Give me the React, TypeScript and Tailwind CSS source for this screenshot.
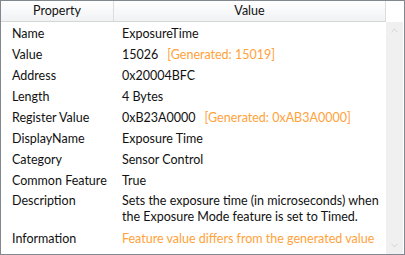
import { ChevronUp, ChevronDown } from 'lucide-react';

const rows: { label: string; value: string[]; generated?: string; orange?: boolean; tall?: boolean }[] = [
  { label: 'Name', value: ['ExposureTime'] },
  { label: 'Value', value: ['15026'], generated: '[Generated: 15019]' },
  { label: 'Address', value: ['0x20004BFC'] },
  { label: 'Length', value: ['4 Bytes'] },
  { label: 'Register Value', value: ['0xB23A0000'], generated: '[Generated: 0xAB3A0000]' },
  { label: 'DisplayName', value: ['Exposure Time'] },
  { label: 'Category', value: ['Sensor Control'] },
  { label: 'Common Feature', value: ['True'] },
  {
    label: 'Description',
    value: ['Sets the exposure time (in microseconds) when', 'the Exposure Mode feature is set to Timed.'],
    tall: true,
  },
  { label: 'Information', value: ['Feature value differs from the generated value'], orange: true },
];

export default function App() {
  return (
    <div
      className="w-[405px] h-[255px] bg-white border border-[#828790] flex flex-col overflow-hidden text-[12.5px] text-[#111]"
      style={{ fontFamily: 'Lato, "Open Sans", sans-serif' }}
    >
      {/* Header */}
      <div className="flex h-[21px] shrink-0">
        <div className="flex w-[385px] border-b border-[#d5d5d5] bg-gradient-to-b from-white to-[#f1f2f4]">
          <div className="w-[113px] border-r border-[#dcdcdc] flex items-center justify-center">Property</div>
          <div className="flex-1 border-r border-[#dcdcdc] flex items-center justify-center">Value</div>
        </div>
        <div className="flex-1 bg-white" />
      </div>

      {/* Body */}
      <div className="flex flex-1 min-h-0">
        <div className="w-[385px] flex flex-col pt-px">
          {rows.map((r) => (
            <div key={r.label} className={`flex ${r.tall ? 'h-[37px] pt-[2px]' : 'h-[21px] items-center'}`}>
              <div className="w-[121px] pl-[11px] leading-[16px] whitespace-nowrap">{r.label}</div>
              <div className={`flex-1 leading-[16px] whitespace-nowrap ${r.orange ? 'text-[#ffa23a]' : ''}`}>
                {r.value.map((line) => (
                  <div key={line}>
                    {line}
                    {r.generated && <span className="ml-[9px] text-[#ffa23a]">{r.generated}</span>}
                  </div>
                ))}
              </div>
            </div>
          ))}
        </div>
        {/* Scrollbar */}
        <div className="w-[17px] bg-[#f0f0f0] flex flex-col justify-between items-center py-[3px]">
          <ChevronUp className="w-[11px] h-[11px] text-[#c5c5c5]" strokeWidth={1.5} />
          <ChevronDown className="w-[11px] h-[11px] text-[#c5c5c5]" strokeWidth={1.5} />
        </div>
      </div>
    </div>
  );
}
